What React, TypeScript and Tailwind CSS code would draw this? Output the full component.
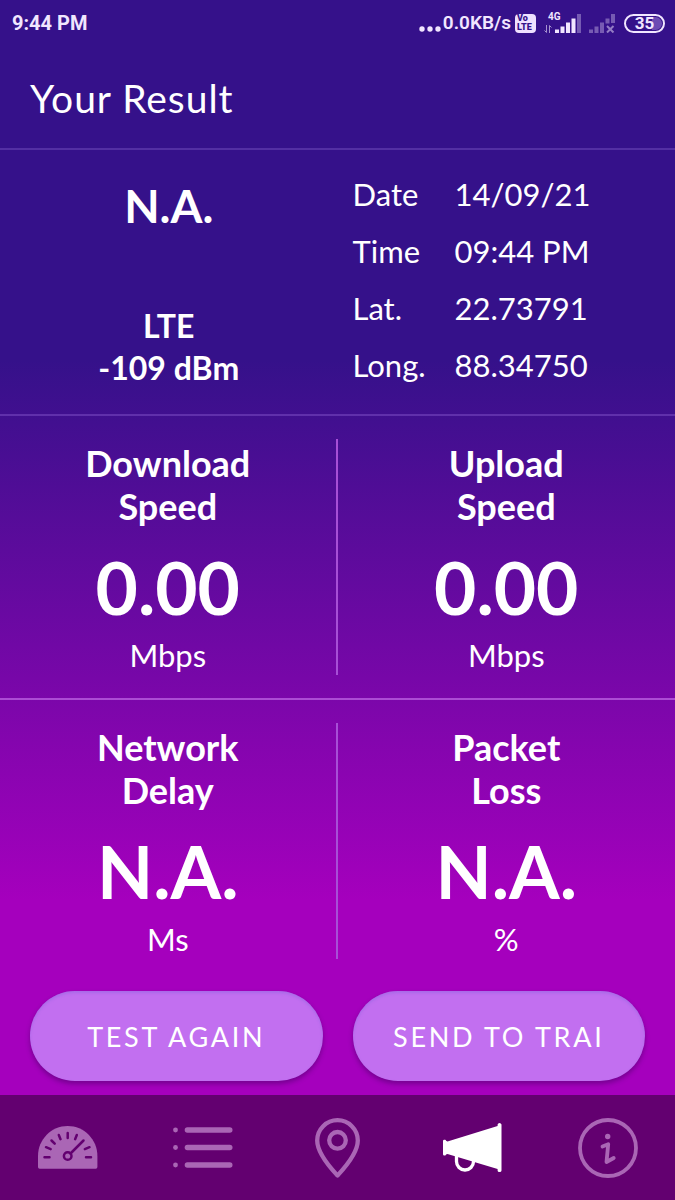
import type { ReactNode } from 'react';
import clsx from 'clsx';

interface Metric {
  title: [string, string];
  value: string;
  unit: string;
}

const DETAILS = [
  { label: 'Date', value: '14/09/21' },
  { label: 'Time', value: '09:44 PM' },
  { label: 'Lat.', value: '22.73791' },
  { label: 'Long.', value: '88.34750' },
];

const SPEED: Metric[] = [
  { title: ['Download', 'Speed'], value: '0.00', unit: 'Mbps' },
  { title: ['Upload', 'Speed'], value: '0.00', unit: 'Mbps' },
];

const QUALITY: Metric[] = [
  { title: ['Network', 'Delay'], value: 'N.A.', unit: 'Ms' },
  { title: ['Packet', 'Loss'], value: 'N.A.', unit: '%' },
];

function GaugeIcon() {
  return (
    <svg width="60" height="43" viewBox="0 0 60 43" fill="none">
      <path d="M0 41V30C0 13.400 13.400 0 29.700 0S59.400 13.400 59.400 30v11q0 1.700-1.700 1.700H1.700Q0 42.700 0 41Z" fill="currentColor" />
      <g stroke="#630070" strokeWidth="2.500" strokeLinecap="round">
        <path d="M6.500 31.200h5M8 21.200l4.700 1.900M13.500 14.500l3.200 3.200M20.800 9l1.700 4.200M29.700 7v5M38.800 9l-1.700 4.200M51.500 21.200l-4.700 1.900M48 31.200h5" />
        <path d="M32.500 27.500L45.500 14.500" />
        <circle cx="29.700" cy="30" r="3.800" />
      </g>
    </svg>
  );
}

function ListIcon() {
  return (
    <svg width="60" height="42" viewBox="0 0 60 42" fill="currentColor">
      {[3, 20.5, 38].map((y) => (
        <g key={y}>
          <circle cx="2.500" cy={y} r="2.400" />
          <rect x="11.700" y={y - 2.7} width="47.800" height="5.400" rx="2.700" />
        </g>
      ))}
    </svg>
  );
}

function PinIcon() {
  return (
    <svg width="46" height="60" viewBox="0 0 46 60" fill="none" stroke="currentColor" strokeWidth="4.300" strokeLinejoin="round">
      <path d="M22.500 57.500C16.500 51 2.200 36 2.200 22.500a20.300 20.300 0 0 1 40.600 0C42.800 36 28.500 51 22.500 57.500Z" />
      <circle cx="22.500" cy="22.300" r="8.300" />
    </svg>
  );
}

function MegaphoneIcon() {
  return (
    <svg width="59" height="50" viewBox="0 0 59 50" fill="currentColor">
      <path d="M0 18q0-1.300 1.300-1.300h.7q1 0 1 1L4.500 18.500 54.600 3V1.500Q55 0 56.500 0t2 1.500v46q0 1.500-2 1.500t-1.900-1.500V46L4.500 31 3 31.500q0 1-1 1h-.7Q0 32.500 0 31.200Z" />
      <path d="M13.500 32v6.500a8.500 8.500 0 0 0 17 0V37" fill="none" stroke="currentColor" strokeWidth="3.300" />
    </svg>
  );
}

function InfoIcon() {
  return (
    <svg width="60" height="60" viewBox="0 0 60 60" fill="none" stroke="currentColor" strokeWidth="3.800" strokeLinecap="round" strokeLinejoin="round">
      <circle cx="30" cy="30" r="28" />
      <path d="M24.500 28.500l5.700-2.300L28.500 44l7.200-4" />
      <circle cx="29.700" cy="18.500" r="2.700" fill="currentColor" stroke="none" />
    </svg>
  );
}

function SignalBars({ muted = false }: { muted?: boolean }) {
  return (
    <svg width="26" height="19" viewBox="0 0 26 19" fill="currentColor">
      <g opacity={muted ? 0.35 : 1}>
        <rect x="0" y="15.500" width="4" height="3.500" />
        <rect x="5.500" y="12.500" width="4" height="6.500" />
        <rect x="11" y="8.500" width="4" height="10.500" />
        <rect x="16.500" y="4.500" width="4" height={muted ? 5 : 14.5} />
      </g>
      <rect x="22" y="0" width="4" height={muted ? 9 : 19} opacity="0.35" />
      {muted && <path d="M18 12l6.500 6.500M24.500 12L18 18.500" stroke="currentColor" strokeWidth="2" opacity="0.5" />}
    </svg>
  );
}

function StatusBar() {
  return (
    <div className="flex h-[46px] items-center justify-between pr-[10px] pl-3 font-[Roboto,sans-serif] text-[#f1e6ff]">
      <span className="text-[20px] font-bold">9:44 PM</span>
      <div className="flex items-center">
        <svg className="mt-3" width="24" height="6" viewBox="0 0 24 6" fill="currentColor">
          <circle cx="3" cy="3" r="2.700" />
          <circle cx="11" cy="3" r="2.700" />
          <circle cx="19" cy="3" r="2.700" />
        </svg>
        <span className="text-[19px] font-semibold">0.0KB/s</span>
        <span className="ml-1 flex h-[19px] w-[21px] flex-col justify-center rounded bg-[#eee0ff] pl-[2px] text-[9px] leading-[9px] font-black text-[#35118a]">
          <span>Vo</span>
          <span>LTE</span>
        </span>
        <div className="ml-2 flex h-5 items-end">
          <div className="flex h-5 w-[11px] flex-col justify-between">
            <span className="pl-1 text-[10px] leading-[8px] font-bold">4G</span>
            <svg width="8" height="8" viewBox="0 0 8 8" fill="none" stroke="currentColor" opacity="0.6">
              <path d="M2.500 0v7.500L.5 5.500M5.500 8V.5l2 2" />
            </svg>
          </div>
          <SignalBars />
        </div>
        <div className="ml-2 flex h-5 items-end">
          <SignalBars muted />
        </div>
        <span className="ml-[9px] flex h-[19px] w-[41px] items-center rounded-full border-2 border-current p-px text-[17px] leading-4 font-bold">
          <span className="flex h-full flex-1 items-center justify-center rounded-full bg-linear-to-r from-transparent from-70% to-[#6d4bb4] to-70%">
            35
          </span>
        </span>
      </div>
    </div>
  );
}

function MetricRow({ metrics }: { metrics: Metric[] }) {
  return (
    <div className="grid grid-cols-2 divide-x-2 divide-[#a74fd6] py-[23px] text-center">
      {metrics.map((metric) => (
        <div key={metric.title.join(' ')} className="pt-[3px]">
          <h2 className="text-[36px] leading-[43px] font-bold">
            {metric.title[0]}
            <br />
            {metric.title[1]}
          </h2>
          <p className="mt-[14px] text-[73px] leading-[90px] font-bold">{metric.value}</p>
          <p className="pt-[3px] text-[31px] leading-10">{metric.unit}</p>
        </div>
      ))}
    </div>
  );
}

function PillButton({ children }: { children: ReactNode }) {
  return (
    <button
      type="button"
      className="h-[90px] flex-1 rounded-full bg-[#c26ff0] pt-[2px] text-[27px] tracking-widest shadow-[0_3px_5px_rgba(60,0,90,0.45)] inset-shadow-[0_2px_3px_rgba(130,100,220,0.4)]"
    >
      {children}
    </button>
  );
}

const NAV = [
  { label: 'Speed test', icon: <GaugeIcon /> },
  { label: 'History', icon: <ListIcon /> },
  { label: 'Map', icon: <PinIcon /> },
  { label: 'Feedback', icon: <MegaphoneIcon />, active: true },
  { label: 'About', icon: <InfoIcon /> },
];

export default function App() {
  return (
    <div className="flex min-h-screen flex-col bg-linear-to-b/srgb from-[#35118a] from-30% to-[#a500bd] to-75% font-[Lato,sans-serif] text-white">
      <StatusBar />
      <header className="border-b-2 border-[#532fa3] px-[30px] pt-[26px] pb-6">
        <h1 className="text-[39px] leading-[52px] tracking-wide">Your Result</h1>
      </header>

      <main className="flex flex-1 flex-col">
        <section className="grid grid-cols-2 border-b-2 border-[#6030ab] pt-4 pb-5">
          <div className="flex flex-col justify-between pt-[11px] pb-[5px] text-center font-bold">
            <p className="text-[46px] leading-[58px]">N.A.</p>
            <div className="text-[32px] leading-[42px]">
              <p>LTE</p>
              <p>-109 dBm</p>
            </div>
          </div>
          <dl className="grid grid-cols-[102px_1fr] pl-[15px] text-[31px] leading-[57px]">
            {DETAILS.map(({ label, value }) => (
              <div key={label} className="contents">
                <dt>{label}</dt>
                <dd>{value}</dd>
              </div>
            ))}
          </dl>
        </section>

        <section className="border-b-2 border-[#ac4cd4]">
          <MetricRow metrics={SPEED} />
        </section>
        <section>
          <MetricRow metrics={QUALITY} />
        </section>

        <div className="mt-auto flex gap-[30px] px-[30px] pb-[14px]">
          <PillButton>TEST AGAIN</PillButton>
          <PillButton>SEND TO TRAI</PillButton>
        </div>
      </main>

      <nav className="grid h-[105px] grid-cols-5 bg-[#630070]">
        {NAV.map(({ label, icon, active }) => (
          <a
            key={label}
            href="#"
            aria-label={label}
            className={clsx('flex items-center justify-center', active ? 'text-white' : 'text-[#aa66b5]')}
          >
            {icon}
          </a>
        ))}
      </nav>
    </div>
  );
}
